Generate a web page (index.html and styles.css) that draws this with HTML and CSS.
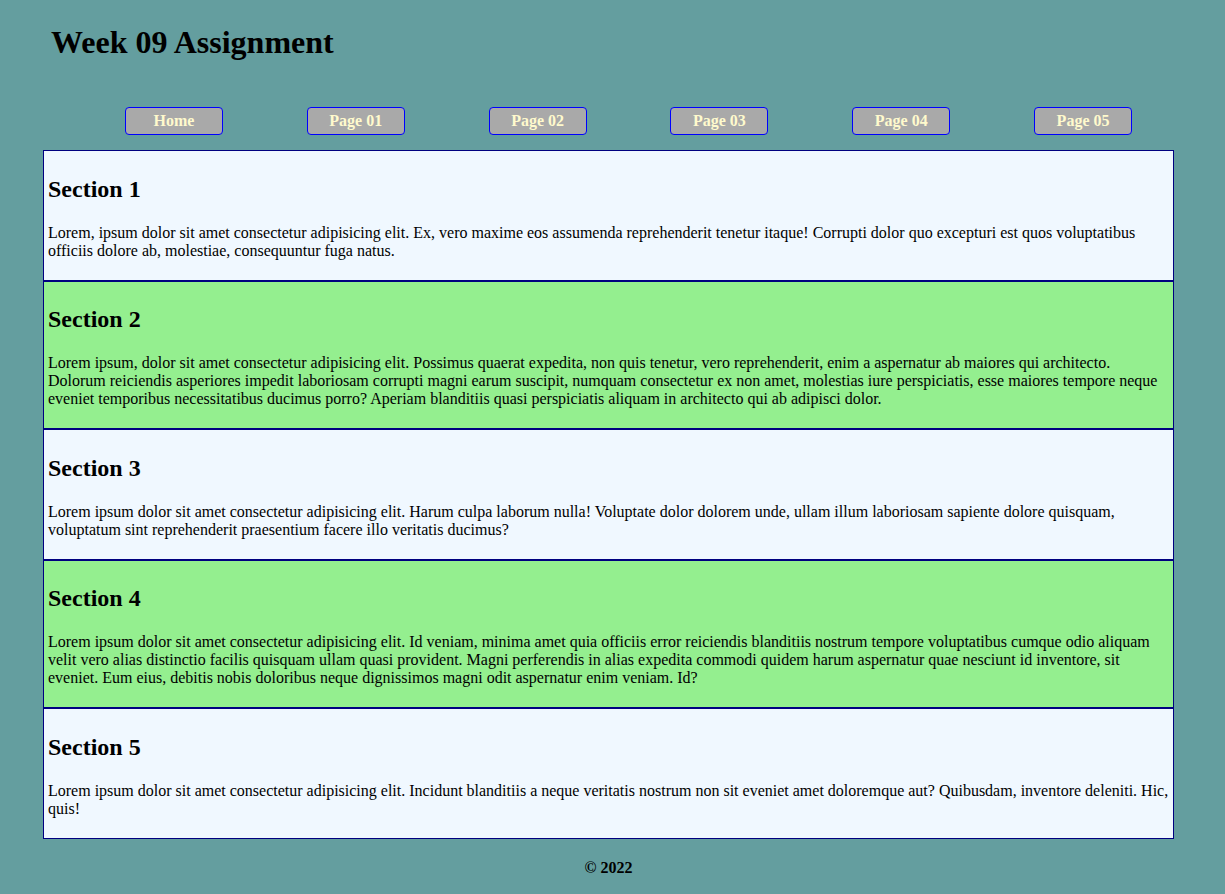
FILE: index.html
```html
<!DOCTYPE html>
<html lang="en">
<head>
<meta charset="utf-8">
<title>Week 09 Assignment</title>
<link rel="stylesheet" href="styles.css">
</head>
<body>
<div class="page">
  <header class="site-header">
    <h1 class="title">Week 09 Assignment</h1>
  </header>
  <nav class="nav">
    <ul class="nav-list">
      <li class="nav-item"><a class="nav-btn" href="#">Home</a></li>
      <li class="nav-item"><a class="nav-btn" href="#">Page 01</a></li>
      <li class="nav-item"><a class="nav-btn" href="#">Page 02</a></li>
      <li class="nav-item"><a class="nav-btn" href="#">Page 03</a></li>
      <li class="nav-item"><a class="nav-btn" href="#">Page 04</a></li>
      <li class="nav-item"><a class="nav-btn" href="#">Page 05</a></li>
    </ul>
  </nav>
  <main class="content">
    <section class="section section-light">
      <h2 class="section-title">Section 1</h2>
      <p class="section-text">Lorem, ipsum dolor sit amet consectetur adipisicing elit. Ex, vero maxime eos assumenda reprehenderit tenetur itaque! Corrupti dolor quo excepturi est quos voluptatibus officiis dolore ab, molestiae, consequuntur fuga natus.</p>
    </section>
    <section class="section section-green">
      <h2 class="section-title">Section 2</h2>
      <p class="section-text">Lorem ipsum, dolor sit amet consectetur adipisicing elit. Possimus quaerat expedita, non quis tenetur, vero reprehenderit, enim a aspernatur ab maiores qui architecto. Dolorum reiciendis asperiores impedit laboriosam corrupti magni earum suscipit, numquam consectetur ex non amet, molestias iure perspiciatis, esse maiores tempore neque eveniet temporibus necessitatibus ducimus porro? Aperiam blanditiis quasi perspiciatis aliquam in architecto qui ab adipisci dolor.</p>
    </section>
    <section class="section section-light">
      <h2 class="section-title">Section 3</h2>
      <p class="section-text">Lorem ipsum dolor sit amet consectetur adipisicing elit. Harum culpa laborum nulla! Voluptate dolor dolorem unde, ullam illum laboriosam sapiente dolore quisquam, voluptatum sint reprehenderit praesentium facere illo veritatis ducimus?</p>
    </section>
    <section class="section section-green">
      <h2 class="section-title">Section 4</h2>
      <p class="section-text">Lorem ipsum dolor sit amet consectetur adipisicing elit. Id veniam, minima amet quia officiis error reiciendis blanditiis nostrum tempore voluptatibus cumque odio aliquam velit vero alias distinctio facilis quisquam ullam quasi provident. Magni perferendis in alias expedita commodi quidem harum aspernatur quae nesciunt id inventore, sit eveniet. Eum eius, debitis nobis doloribus neque dignissimos magni odit aspernatur enim veniam. Id?</p>
    </section>
    <section class="section section-light">
      <h2 class="section-title">Section 5</h2>
      <p class="section-text">Lorem ipsum dolor sit amet consectetur adipisicing elit. Incidunt blanditiis a neque veritatis nostrum non sit eveniet amet doloremque aut? Quibusdam, inventore deleniti. Hic, quis!</p>
    </section>
  </main>
  <footer class="site-footer">
    <p class="copyright">&copy; 2022</p>
  </footer>
</div>
</body>
</html>
```
FILE: styles.css
```css
html, body {
  margin: 0;
  padding: 0;
}

body {
  background: #649e9f;
  font-family: "Liberation Serif", "Times New Roman", serif;
  font-size: 16px;
  color: #000;
}

.page {
  width: 1131px;
  margin-left: 43px;
}

.site-header {
  padding-top: 24px;
}

.title {
  margin: 0;
  padding-left: 8px;
  font-size: 32px;
  font-weight: bold;
  line-height: normal;
}

.nav {
  margin-top: 46px;
  margin-bottom: 15px;
}

.nav-list {
  list-style: none;
  margin: 0;
  padding: 0 0 0 40px;
  display: flex;
}

.nav-item {
  flex: 1;
  display: flex;
  justify-content: center;
}

.nav-btn {
  display: block;
  box-sizing: border-box;
  width: 98px;
  height: 28px;
  line-height: 26px;
  text-align: center;
  background: darkgray;
  border: 1px solid blue;
  border-radius: 4px;
  color: lemonchiffon;
  font-weight: bold;
  font-size: 16px;
  text-decoration: none;
}

.content {
  display: flex;
  flex-direction: column;
}

.section {
  border: 1px solid navy;
  padding: 5px 4px 4px;
}

.section-light {
  background: aliceblue;
}

.section-green {
  background: #94ef8f;
}

.section-title {
  font-size: 24px;
  font-weight: bold;
  margin: 19.92px 0 20.6px;
}

.section-text {
  margin: 16px 0;
  line-height: normal;
}

.site-footer {
  text-align: center;
}

.copyright {
  margin: 20px 0 0;
  font-weight: bold;
}
```
